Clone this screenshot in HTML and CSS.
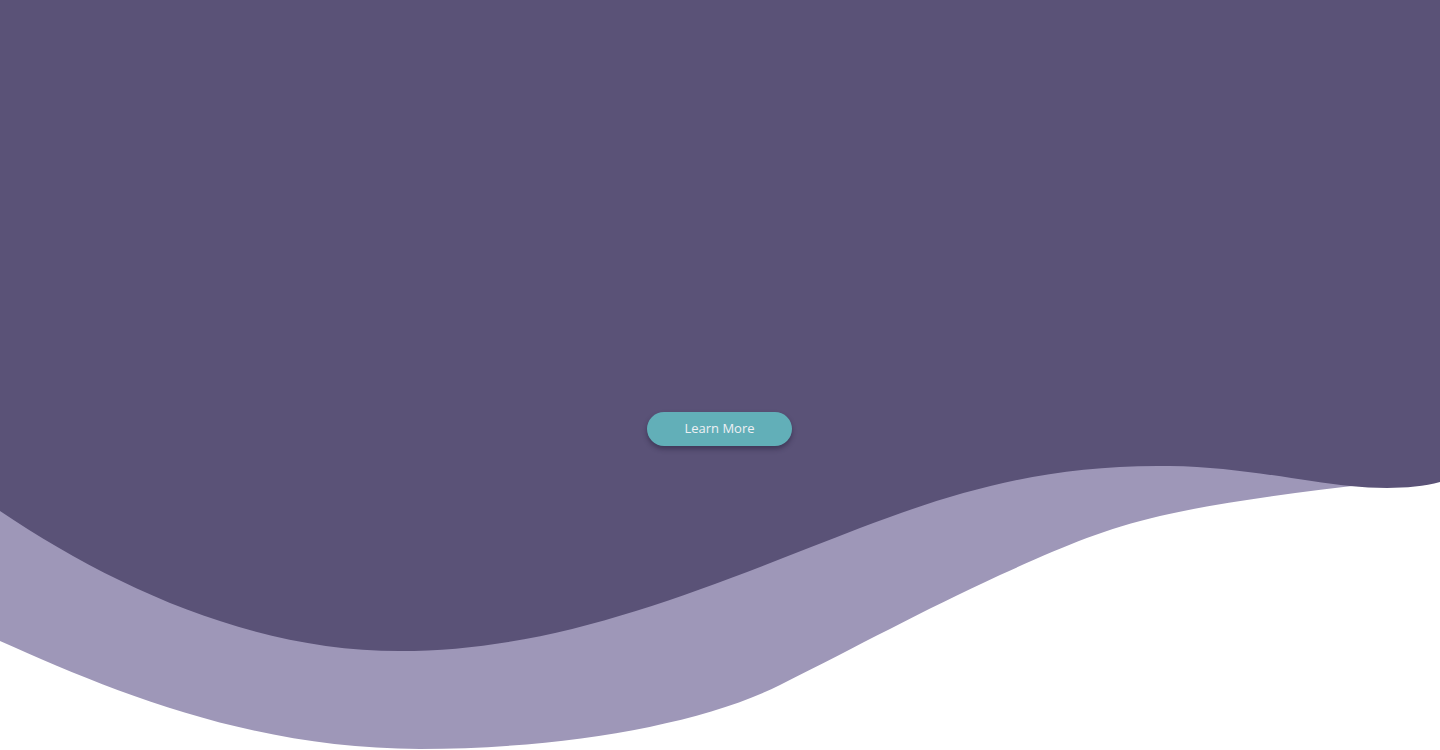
FILE: index.html
```html
<!DOCTYPE html>
<html lang="en">
<head>
<meta charset="utf-8">
<title>Hero</title>
<link rel="stylesheet" href="styles.css">
</head>
<body>
<section class="hero">
  <svg class="hero-bg" viewBox="0 0 1440 750" preserveAspectRatio="none" aria-hidden="true">
    <path class="wave-light" d="M0,440 H1370 V484 C1300,492 1220,502 1160,516 C1100,530 1060,548 1000,575 C920,612 860,645 780,685 C700,725 560,749 420,749 C250,749 110,690 0,641 Z"/>
    <path class="wave-dark" d="M0,0 H1440 V482 C1415,489 1380,489 1350,486 C1300,481 1240,467 1170,466 C1050,464 960,490 860,528 C700,590 560,651 400,651 C250,651 110,585 0,511 Z"/>
  </svg>
  <div class="hero-content">
    <a class="btn" href="#">Learn More</a>
  </div>
</section>
</body>
</html>
```

FILE: styles.css
```css
* { box-sizing: border-box; }
html, body { margin: 0; padding: 0; background: #ffffff; }
body { font-family: "Open Sans", "Liberation Sans", sans-serif; overflow: hidden; }
.hero { position: relative; width: 100%; height: 750px; }
.hero-bg { position: absolute; inset: 0; width: 100%; height: 100%; display: block; }
.wave-dark { fill: #5a5277; }
.wave-light { fill: #9e97b8; }
.hero-content { position: relative; display: flex; justify-content: center; padding-top: 412px; padding-right: 1px; }
.btn {
  display: flex; align-items: center; justify-content: center;
  width: 145px; height: 34px; border-radius: 17px; padding-bottom: 3px;
  background: #62afb8; color: #eef0f4; text-decoration: none;
  font-size: 13px; box-shadow: 0 3px 5px rgba(30, 25, 50, 0.45);
}
```
